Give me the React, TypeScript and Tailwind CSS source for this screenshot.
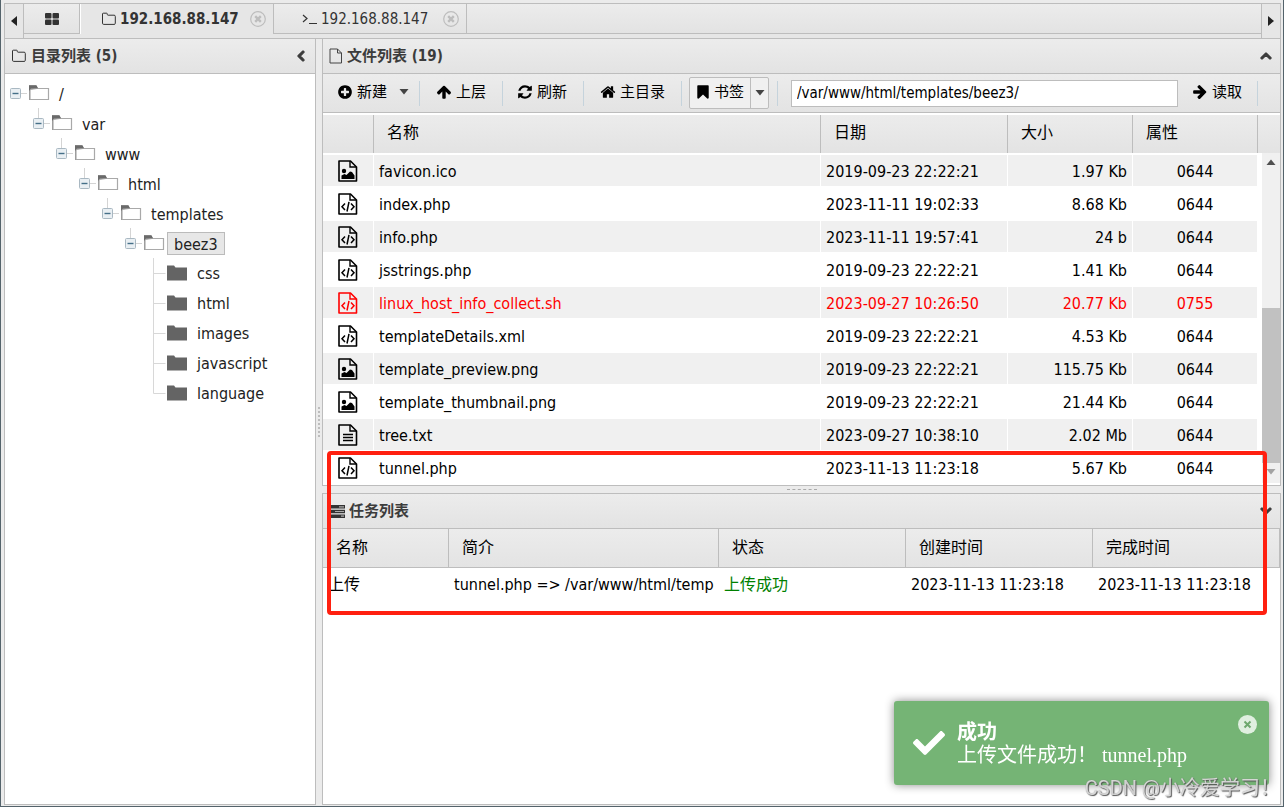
import type { ReactNode } from "react"
import { FaCheck, FaChevronDown, FaChevronLeft, FaChevronUp } from "react-icons/fa"

const FILES = [
  { name: "favicon.ico", date: "2019-09-23 22:22:21", size: "1.97 Kb", mode: "0644", kind: "image" },
  { name: "index.php", date: "2023-11-11 19:02:33", size: "8.68 Kb", mode: "0644", kind: "code" },
  { name: "info.php", date: "2023-11-11 19:57:41", size: "24 b", mode: "0644", kind: "code" },
  { name: "jsstrings.php", date: "2019-09-23 22:22:21", size: "1.41 Kb", mode: "0644", kind: "code" },
  { name: "linux_host_info_collect.sh", date: "2023-09-27 10:26:50", size: "20.77 Kb", mode: "0755", kind: "code" },
  { name: "templateDetails.xml", date: "2019-09-23 22:22:21", size: "4.53 Kb", mode: "0644", kind: "code" },
  { name: "template_preview.png", date: "2019-09-23 22:22:21", size: "115.75 Kb", mode: "0644", kind: "image" },
  { name: "template_thumbnail.png", date: "2019-09-23 22:22:21", size: "21.44 Kb", mode: "0644", kind: "image" },
  { name: "tree.txt", date: "2023-09-27 10:38:10", size: "2.02 Mb", mode: "0644", kind: "text" },
  { name: "tunnel.php", date: "2023-11-13 11:23:18", size: "5.67 Kb", mode: "0644", kind: "code" },
]

const PATH = ["/", "var", "www", "html", "templates", "beez3"]
const FOLDERS = ["css", "html", "images", "javascript", "language"]

const ICONS = {
  plus: "M1344 960v-128q0-26-19-45t-45-19h-256v-256q0-26-19-45t-45-19h-128q-26 0-45 19t-19 45v256h-256q-26 0-45 19t-19 45v128q0 26 19 45t45 19h256v256q0 26 19 45t45 19h128q26 0 45-19t19-45v-256h256q26 0 45-19t19-45zm320-64q0 209-103 385.5t-279.5 279.5-385.5 103-385.5-103-279.5-279.5-103-385.5 103-385.5 279.5-279.5 385.5-103 385.5 103 279.5 279.5 103 385.5z",
  arrow: "M1675 971q0 51-37 90l-75 75q-38 38-91 38-54 0-90-38l-294-293v704q0 52-37.5 84.5t-90.5 32.5h-128q-53 0-90.5-32.5t-37.5-84.5v-704l-294 293q-36 38-90 38t-90-38l-75-75q-38-38-38-90 0-53 38-91l651-651q35-37 90-37 54 0 91 37l651 651q37 39 37 91z",
  refresh: "M1639 1056q0 5-1 7-64 268-268 434.5t-478 166.5q-146 0-282.5-55t-243.5-157l-129 129q-19 19-45 19t-45-19-19-45v-448q0-26 19-45t45-19h448q26 0 45 19t19 45-19 45l-137 137q71 66 161 102t187 36q134 0 250-65t186-179q11-17 53-117 8-23 30-23h192q13 0 22.5 9.5t9.5 22.5zm25-800v448q0 26-19 45t-45 19h-448q-26 0-45-19t-19-45 19-45l138-138q-148-137-349-137-134 0-250 65t-186 179q-11 17-53 117-8 23-30 23h-199q-13 0-22.5-9.5t-9.5-22.5v-7q65-268 270-434.5t480-166.5q146 0 284 55.5t245 156.5l130-129q19-19 45-19t45 19 19 45z",
  home: "M1472 992v480q0 26-19 45t-45 19h-384v-384h-256v384h-384q-26 0-45-19t-19-45v-480q0-1 .5-3t.5-3l575-474 575 474q1 2 1 6zm223-69l-62 74q-8 9-21 11h-3q-13 0-21-7l-692-577-692 577q-12 8-24 7-13-2-21-11l-62-74q-8-10-7-23.5t11-21.5l719-599q32-26 76-26t76 26l244 204v-195q0-14 9-23t23-9h192q14 0 23 9t9 23v408l219 182q10 8 11 21.5t-7 23.5z",
  bookmark: "M1420 128q23 0 44 9 33 13 52.500 41t19.500 62v1289q0 34-19.500 62t-52.500 41q-19 8-44 8-48 0-83-32l-441-424-441 424q-36 33-83 33-23 0-44-9-33-13-52.500-41t-19.500-62v-1289q0-34 19.500-62t52.500-41q21-9 44-9z",
}

function Icon({ name, className = "" }: { name: keyof typeof ICONS; className?: string }) {
  return (
    <svg viewBox="0 0 1792 1792" fill="currentColor" className={`w-4 h-4 shrink-0 ${className}`}>
      <path d={ICONS[name]} />
    </svg>
  )
}

function Caret({ className = "" }: { className?: string }) {
  return (
    <svg viewBox="0 0 10 6" className={`w-[10px] h-[6px] shrink-0 ${className}`}>
      <path d="M0.500 0h9L5 5.500z" fill="currentColor" />
    </svg>
  )
}

function FolderOutline() {
  return (
    <svg viewBox="0 0 16 14" className="w-4 h-[14px] shrink-0" fill="none" stroke="#333">
      <path d="M1.500 2q0-.8.8-.8h3.200q.8 0 .8.800v.500q0 .700.800.700h6q1.200 0 1.200 1.200v7q0 1-1.200 1H2.700q-1.200 0-1.200-1.200z" />
    </svg>
  )
}

function FileOutline() {
  return (
    <svg viewBox="0 0 14 16" className="w-[14px] h-4 shrink-0" fill="none" stroke="#444">
      <path d="M1 1h7.500l4 4v10H1zM8.500 1v4h4" />
    </svg>
  )
}

function CloseCircle() {
  return (
    <svg viewBox="0 0 16 16" className="w-4 h-4" fill="none" stroke="#bdbdbd">
      <circle cx="8" cy="8" r="7.300" strokeWidth="1.200" />
      <path d="M5.200 5.200l5.600 5.600M10.800 5.200l-5.600 5.600" strokeWidth="2.400" />
    </svg>
  )
}

function FileIcon({ kind }: { kind: string }) {
  return (
    <svg viewBox="0 0 20 22" className="w-5 h-[22px] mx-auto" fill="none" stroke="currentColor">
      <path d="M1 1h11.500l6 6v14H1z" strokeWidth="1.600" strokeLinejoin="round" />
      <path d="M12 1v6h6" strokeWidth="1.400" />
      {kind === "code" && (
        <path d="M7 10.500L4 13.700l3 3.200M13 10.500l3 3.200-3 3.200M11 8.800L9 18.500" strokeWidth="1.500" />
      )}
      {kind === "image" && (
        <g fill="currentColor" stroke="none">
          <circle cx="6" cy="11" r="2.200" />
          <path d="M3.500 19v-3.500l3-1.500 2 1 3.500-3.500 2 .500 2.500 3.500V19z" />
        </g>
      )}
      {kind === "text" && <path d="M5 10.500h10M5 13.500h10M5 16.500h10" strokeWidth="1.300" />}
    </svg>
  )
}

function OpenFolder() {
  return (
    <svg viewBox="0 0 21 16" className="w-[21px] h-4 shrink-0">
      <path d="M0 15V.500h7l1.500 2V5H1v10z" fill="#8a8a8a" />
      <path d="M1 4.500V14.500h18.500V3.500H8z" fill="#fff" stroke="#a9a9a9" strokeWidth="1.200" />
      <path d="M0 .200h7.500l1.500 3H2L0 6z" fill="#6a6a6a" />
    </svg>
  )
}

function ClosedFolder() {
  return (
    <svg viewBox="0 0 21 16" className="w-[21px] h-4 shrink-0">
      <path d="M0 15.500V.500h7l1.500 2h11.500v13z" fill="#646464" />
    </svg>
  )
}

function Expander({ root }: { root: boolean }) {
  return (
    <svg viewBox="0 0 19 30" className="w-[19px] h-[30px] shrink-0" fill="none">
      {!root && <path d="M5.500 0v10" stroke="#d4d4d4" />}
      <path d="M11 15.500h6" stroke="#d4d4d4" />
      <rect x="0.500" y="10.500" width="10" height="10" rx="1" fill="#e9eff3" stroke="#a9b8c2" />
      <path d="M2.500 15.500h6" stroke="#456f88" strokeWidth="1.400" />
    </svg>
  )
}

function Branch({ last }: { last: boolean }) {
  return (
    <svg viewBox="0 0 19 30" className="w-[19px] h-[30px] shrink-0" fill="none" stroke="#d8d8d8">
      <path d={last ? "M5.500 0v15.500h12" : "M5.500 0v30M5.500 15.500h12"} />
    </svg>
  )
}

function TreeNode({ depth }: { depth: number }) {
  const selected = depth === PATH.length - 1
  return (
    <li>
      <div className="flex items-center h-[30px]">
        <Expander root={depth === 0} />
        <OpenFolder />
        <span
          className={`ml-[2px] h-[23px] leading-[23px] px-[6px] border ${
            selected ? "bg-[#e7e7e7] border-[#bbb]" : "border-transparent"
          }`}
        >
          {PATH[depth]}
        </span>
      </div>
      <ul className="pl-[23px]">
        {selected
          ? FOLDERS.map((name, i) => (
              <li key={name} className="flex items-center h-[30px]">
                <Branch last={i === FOLDERS.length - 1} />
                <ClosedFolder />
                <span className="ml-[2px] px-[7px] pt-[2px]">{name}</span>
              </li>
            ))
          : <TreeNode depth={depth + 1} />}
      </ul>
    </li>
  )
}

function PanelHeader({ icon, title, action }: { icon: ReactNode; title: string; action: ReactNode }) {
  return (
    <header className="flex items-center h-[35px] pl-[6px] pr-2 gap-1 border-b border-[#bdbdbd] bg-linear-to-b from-[#ececec] to-[#e3e3e3] text-[#3c3c3c]">
      {icon}
      <h2 className="flex-1 font-bold">{title}</h2>
      {action}
    </header>
  )
}

const CHEVRON = "w-3 h-3 stroke-current stroke-[50px]"
const TH = "text-left font-normal border-r border-[#bdbdbd] px-[13px] pb-[2px]"
const TOOL = "flex items-center gap-1 h-[25px] pb-[3px] border-r border-[#c5d3dc] shrink-0"

export default function App() {
  return (
    <div className="min-h-screen flex flex-col bg-[#ebebeb] border-x border-b border-[#54636b] pt-[3px] pl-[3px] pr-[2px] pb-px text-[15px] leading-5 text-[#222] [font-family:'DejaVu_Sans_Condensed','Noto_Sans_CJK_SC',sans-serif]">
      {/* Session tabs */}
      <nav className="flex h-[36px] border border-[#bdbdbd] bg-[#e6e6e6]">
        <button aria-label="向左滚动" className="w-[19px] border-r border-[#bdbdbd] flex items-center justify-center">
          <svg viewBox="0 0 6 10" className="w-[6px] h-[10px]"><path d="M6 0v10L0 5z" fill="#222" /></svg>
        </button>
        <button aria-label="主页" className="w-[56px] h-[30px] border-r border-b border-[#bdbdbd] bg-linear-to-b from-[#ececec] to-[#e3e3e3] flex items-center justify-center">
          <svg viewBox="0 0 14 12" className="w-[14px] h-3" fill="#333">
            <rect width="6.500" height="5.500" rx="1" /><rect x="7.500" width="6.500" height="5.500" rx="1" />
            <rect y="6.500" width="6.500" height="5.500" rx="1" /><rect x="7.500" y="6.500" width="6.500" height="5.500" rx="1" />
          </svg>
        </button>
        <div className="w-[194px] h-[30px] border-x border-l-white border-r-[#bdbdbd] flex items-center pl-5 gap-[3px]">
          <FolderOutline />
          <button className="font-bold text-[#333] w-[127px] text-left">192.168.88.147</button>
          <button aria-label="关闭"><CloseCircle /></button>
        </div>
        <div className="w-[193px] h-[30px] border-r border-b border-[#bdbdbd] bg-linear-to-b from-[#ececec] to-[#e3e3e3] flex items-center pl-7 gap-[3px]">
          <svg viewBox="0 0 16 12" className="w-4 h-3" fill="none" stroke="#333"><path d="M1 2l4 3.500L1 9M7 10.500h8" strokeWidth="1.200" /></svg>
          <button className="w-[119px] text-left text-[#333]">192.168.88.147</button>
          <button aria-label="关闭"><CloseCircle /></button>
        </div>
        <div className="flex-1 h-[30px] border-b border-[#bdbdbd] bg-linear-to-b from-[#ececec] to-[#e3e3e3]" />
        <button aria-label="向右滚动" className="w-[19px] border-l border-[#bdbdbd] flex items-center justify-center">
          <svg viewBox="0 0 6 10" className="w-[6px] h-[10px]"><path d="M0 0v10l6-5z" fill="#222" /></svg>
        </button>
      </nav>

      <div className="flex-1 flex">
        {/* Directory tree */}
        <aside className="w-[312px] shrink-0 flex flex-col border border-t-0 border-[#bdbdbd] bg-white">
          <PanelHeader
            icon={<FolderOutline />}
            title="目录列表 (5)"
            action={<button aria-label="收起目录"><FaChevronLeft className={CHEVRON} /></button>}
          />
          <ul className="pt-1 pl-[5px] text-base leading-5">
            <TreeNode depth={0} />
          </ul>
        </aside>
        <div className="w-[6px] shrink-0 flex justify-center pt-[368px]">
          <div className="h-[30px] border-l-2 border-dotted border-[#bdbdbd]" />
        </div>

        <main className="flex-1 min-w-0 flex flex-col">
          {/* File list */}
          <section className="border border-t-0 border-[#bdbdbd] bg-white pb-[2px]">
            <PanelHeader
              icon={<FileOutline />}
              title="文件列表 (19)"
              action={<button aria-label="收起文件列表"><FaChevronUp className={CHEVRON} /></button>}
            />
            <div className="flex items-center h-[39px] pl-[14px] pr-[22px] border-b border-[#bdbdbd] bg-linear-to-b from-[#ececec] to-[#e3e3e3] text-black">
              <button className={`${TOOL} w-[83px]`}>
                <Icon name="plus" />新建<Caret className="ml-2 text-[#444]" />
              </button>
              <button className={`${TOOL} w-[83px] pl-4`}><Icon name="arrow" />上层</button>
              <button className={`${TOOL} w-[81px] pl-[14px]`}><Icon name="refresh" />刷新</button>
              <button className={`${TOOL} w-[98px] pl-4`}><Icon name="home" />主目录</button>
              <div className="flex items-center w-[80px] h-8 ml-[7px] shrink-0 rounded-xs border border-[#bdbdbd] bg-[#f0f0f0]">
                <button className="flex items-center gap-[3px] w-[61px] h-full pl-[5px] pb-[3px] border-r border-[#bdbdbd]"><Icon name="bookmark" />书签</button>
                <button aria-label="书签菜单" className="flex-1 flex justify-center"><Caret className="text-[#444]" /></button>
              </div>
              <div className="w-[9px] h-[25px] shrink-0 border-r border-[#c5d3dc]" />
              <input
                aria-label="路径"
                defaultValue="/var/www/html/templates/beez3/"
                className="flex-1 min-w-0 h-[27px] ml-[13px] px-[5px] border border-[#bdbdbd] bg-white"
              />
              <button className={`${TOOL} w-[80px] pl-[14px]`}><Icon name="arrow" className="rotate-90" />读取</button>
            </div>
            <div className="flex pt-[2px]">
              <table className="flex-1 min-w-0 table-fixed border-separate border-spacing-0 text-base leading-5 text-black">
                <colgroup>
                  <col className="w-[51px]" /><col /><col className="w-[187px]" /><col className="w-[125px]" /><col className="w-[125px]" />
                </colgroup>
                <thead>
                  <tr className="h-[38px] bg-linear-to-b from-[#ececec] to-[#e3e3e3]">
                    <th aria-label="类型" className={TH} />
                    {["名称", "日期", "大小", "属性"].map((label) => <th key={label} className={TH}>{label}</th>)}
                  </tr>
                </thead>
                <tbody>
                  {FILES.map((file) => (
                    <tr
                      key={file.name}
                      className={`h-[33px] odd:bg-[#f0f0f0] [&>td]:border-white [&>td]:border-t-2 [&>td]:border-r ${
                        file.mode === "0755" ? "text-[#f00]" : ""
                      }`}
                    >
                      <td><FileIcon kind={file.kind} /></td>
                      <td className="px-[5px] pt-[2px]">{file.name}</td>
                      <td className="px-[5px] pt-[2px] whitespace-nowrap">{file.date}</td>
                      <td className="px-[5px] pt-[2px] text-right">{file.size}</td>
                      <td className="pt-[2px] text-center">{file.mode}</td>
                    </tr>
                  ))}
                </tbody>
              </table>
              <div className="w-[22px] shrink-0 flex flex-col">
                <div className="h-[38px] bg-linear-to-b from-[#ececec] to-[#e3e3e3]" />
                <div className="flex-1 ml-1 bg-[#f0f0f0] flex flex-col items-center">
                  <Caret className="mt-[6px] rotate-180 text-[#505050]" />
                  <div className="w-full mt-[143px] h-[155px] bg-[#c1c1c1]" />
                  <Caret className="mt-[6px] text-[#a3a3a3]" />
                </div>
              </div>
            </div>
          </section>

          <div className="h-[7px] flex items-center justify-center">
            <div className="w-[30px] border-t border-dashed border-[#aaa]" />
          </div>

          {/* Transfer tasks */}
          <section className="relative flex-1 border border-[#bdbdbd] bg-white">
            <PanelHeader
              icon={
                <svg viewBox="0 0 16 13" className="w-4 h-[13px]" fill="#333">
                  <path d="M0 0h16v3.500H0zM0 4.700h16v3.500H0zM0 9.400h16V13H0z" />
                  <path d="M10 1.200h5v1.200h-5zM6 5.900h9v1.200H6zM12 10.600h3v1.200h-3z" fill="#aaa" />
                </svg>
              }
              title="任务列表"
              action={<button aria-label="收起任务列表"><FaChevronDown className={CHEVRON} /></button>}
            />
            <table className="w-full table-fixed border-separate border-spacing-0 text-base leading-5 text-black">
              <colgroup>
                <col className="w-[126px]" /><col className="w-[270px]" /><col className="w-[187px]" /><col className="w-[187px]" /><col />
              </colgroup>
              <thead>
                <tr className="h-[39px] bg-linear-to-b from-[#ececec] to-[#e3e3e3]">
                  {["名称", "简介", "状态", "创建时间", "完成时间"].map((label) => (
                    <th key={label} className="text-left font-normal border-r border-b border-[#bdbdbd] px-[13px]">{label}</th>
                  ))}
                </tr>
              </thead>
              <tbody>
                <tr className="h-[33px] whitespace-nowrap">
                  <td className="px-[5px]">上传</td>
                  <td className="pl-[5px] overflow-hidden">tunnel.php =&gt; /var/www/html/temp</td>
                  <td className="px-[5px] text-[#008000]">上传成功</td>
                  <td className="px-[5px]">2023-11-13 11:23:18</td>
                  <td className="px-[5px]">2023-11-13 11:23:18</td>
                </tr>
              </tbody>
            </table>
            <div className="absolute -top-[43px] left-1 right-[13px] h-[164px] border-4 border-[#ff2010] rounded pointer-events-none" />
          </section>
        </main>
      </div>

      {/* Upload toast */}
      <div
        role="status"
        className="fixed right-[15px] bottom-[22px] w-[375px] h-[84px] pl-[19px] pr-3 flex items-center gap-3 rounded-[3px] bg-[#75b475] text-white shadow-[0_0_10px_rgba(0,0,0,0.45)] [font-family:'Liberation_Serif','Noto_Sans_CJK_SC',serif]"
      >
        <FaCheck className="w-8 h-8 shrink-0" />
        <div className="flex-1 pt-[2px] text-xl leading-[23px]">
          <strong className="block">成功</strong>
          <p>上传文件成功！ tunnel.php</p>
        </div>
        <button aria-label="关闭通知" className="self-start mt-[14px]">
          <svg viewBox="0 0 19 19" className="w-[19px] h-[19px]">
            <circle cx="9.500" cy="9.500" r="9.500" fill="#e0efe0" />
            <path d="M6.500 6.500l6 6M12.500 6.500l-6 6" stroke="#6ea86e" strokeWidth="2" />
          </svg>
        </button>
      </div>
      <div className="fixed right-1 bottom-1 text-xl leading-[30px] text-white/70 [text-shadow:1px_1px_1px_#555,0_0_1px_#777] [font-family:Roboto,'Noto_Sans_CJK_SC',sans-serif]">
        CSDN @小冷爱学习！
      </div>
    </div>
  )
}
